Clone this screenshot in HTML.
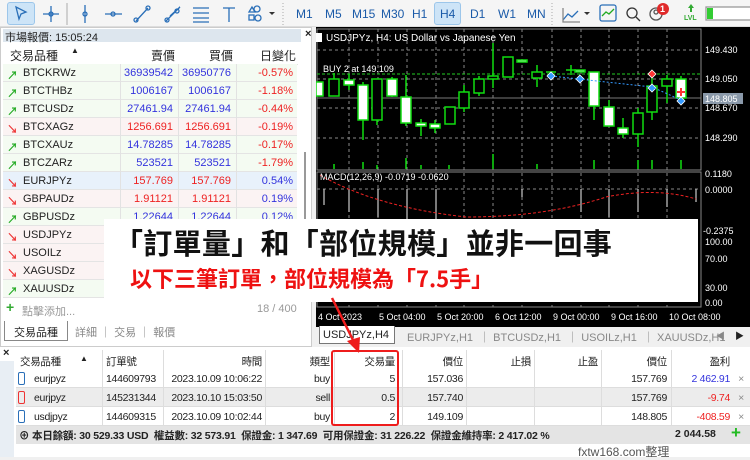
<!DOCTYPE html>
<html><head><meta charset="utf-8"><style>
*{margin:0;padding:0;box-sizing:border-box}
body{width:750px;height:457px;overflow:hidden;background:#f0f0f0;font-family:"Liberation Sans","Noto Sans CJK TC",sans-serif;font-size:11px;color:#222;position:relative}
.a{position:absolute}
.tb{left:0;top:0;width:750px;height:27px;background:#f5f5f5;border-bottom:1px solid #ddd}
.tf{font-size:12px;color:#1a5aa8;top:7px}
.lp{left:0;top:27px;width:312px;height:320px;background:#fff;border:1px solid #ccc}
.row{position:absolute;left:3px;width:294px;height:18px;background:#f4fbf2;border-bottom:1px solid #e4e4e4;font-size:11px}
.row span{position:absolute;top:3px}
.c1{left:20px;color:#222}.c2{right:124px;text-align:right}.c3{right:66px}.c4{right:4px}
.bl{color:#3333dd}.rd{color:#ee2222}
.vl{position:absolute;top:0;height:18px;width:1px;background:#e2e2e2}
.tbl{left:0;top:347px;width:750px;height:110px;background:#fff}
.tr{position:absolute;left:16px;width:734px;height:19px;border-bottom:1px solid #ddd;font-size:10.5px;letter-spacing:-0.3px}
.tr span{position:absolute;top:4px}
</style></head><body>
<div class="a tb">
 <div class="a" style="left:7px;top:2px;width:28px;height:23px;background:#cde4f7;border:1px solid #9cc6ea;border-radius:3px"></div>
 <svg class="a" style="left:0;top:0" width="290" height="27" fill="none" stroke="#2a6fb8" stroke-width="1.3">
  <path d="M16 7l3 12 2-5 5-2z"/>
  <path d="M51 6v16M43 14h16"/><circle cx="51" cy="14" r="2"/>
  <line x1="67" y1="3" x2="67" y2="25" stroke="#bbb"/>
  <path d="M85 5v18"/><circle cx="85" cy="14" r="2"/>
  <path d="M105 14h17"/><circle cx="113" cy="14" r="2"/>
  <path d="M136 21l12-13"/><circle cx="136" cy="20" r="2"/><circle cx="148" cy="8" r="2"/>
  <path d="M166 21l14-14M170 16l10-9"/><circle cx="167" cy="20" r="2"/><circle cx="177" cy="11" r="2"/>
  <path d="M193 8h16M193 13h16M193 18h16M193 22h16"/>
  <path d="M223 8h12M229 8v14"/>
  <circle cx="257" cy="9" r="3"/><path d="M249 12l3-5 3 5z"/><rect x="249" y="15" width="5" height="5"/><circle cx="258" cy="18" r="3"/>
  <path d="M269 12l3 3 3-3z" fill="#333" stroke="none"/>
  <line x1="283" y1="3" x2="283" y2="25" stroke="#bbb" stroke-dasharray="1 2"/>
 </svg>
 <span class="a tf" style="left:296px">M1</span><span class="a tf" style="left:325px">M5</span><span class="a tf" style="left:352px">M15</span><span class="a tf" style="left:381px">M30</span><span class="a tf" style="left:412px">H1</span>
 <div class="a" style="left:434px;top:2px;width:27px;height:23px;background:#cde4f7;border:1px solid #9cc6ea;border-radius:3px"></div>
 <span class="a tf" style="left:440px">H4</span><span class="a tf" style="left:470px">D1</span><span class="a tf" style="left:498px">W1</span><span class="a tf" style="left:527px">MN</span>
 <svg class="a" style="left:550px;top:0" width="200" height="27" fill="none" stroke="#2a6fb8" stroke-width="1.3">
  <line x1="2" y1="3" x2="2" y2="25" stroke="#bbb" stroke-dasharray="1 2"/>
  <path d="M13 20l5-6 4 3 6-6" /><path d="M13 8v14h17" stroke="#888"/>
  <path d="M34 12l3 3 3-3z" fill="#333" stroke="none"/>
  <rect x="50" y="5" width="16" height="16" rx="2"/><path d="M52 16l4-4 3 2 5-5" stroke="#2a2"/>
  <circle cx="82" cy="13" r="5" stroke="#333"/><path d="M86 17l4 4" stroke="#333"/>
  <circle cx="106" cy="14" r="6" stroke="#555"/><circle cx="106" cy="12" r="2" stroke="#555"/>
  <circle cx="113" cy="9" r="6" fill="#e02a2a" stroke="none"/>
  <path d="M141 4l-3 4h2v4h2v-4h2z" fill="#3a3" stroke="none"/>
  <rect x="156" y="7" width="48" height="13" stroke="#999" fill="#fff"/><rect x="157" y="8" width="6" height="11" fill="#3c3" stroke="none"/>
 </svg>
 <span class="a" style="left:660px;top:4px;color:#fff;font-size:9px;font-weight:bold">1</span>
 <span class="a" style="left:684px;top:15px;color:#3a3;font-size:7px;font-weight:bold">LVL</span>
</div>

<div class="a lp">
 <div class="a" style="left:2px;top:1px;width:298px;height:13px;background:#dde6ee"></div>
 <span class="a" style="left:4px;top:1px;font-size:11px">市場報價: 15:05:24</span>
 <span class="a" style="left:304px;top:0;font-size:11px;font-weight:bold">×</span>
 <div class="a" style="left:3px;top:16px;width:294px;height:21px;background:#fff;border-bottom:1px solid #e2e2e2"></div>
 <span class="a" style="left:9px;top:19px;font-size:12px">交易品種</span><span class="a" style="left:70px;top:18px;font-size:8px">▲</span>
 <span class="a" style="left:150px;top:19px;font-size:12px">賣價</span><span class="a" style="left:208px;top:19px;font-size:12px">買價</span><span class="a" style="left:259px;top:19px;font-size:12px">日變化</span>
 <div class="a" style="left:303px;top:124px;width:2px;height:150px;background:#999"></div>
</div>
<div id="rows"></div>
<div class="a" style="left:3px;top:298px;width:300px;height:20px;background:#fff"></div>
<span class="a" style="left:6px;top:299px;color:#3a3;font-size:14px;font-weight:bold">+</span>
<span class="a" style="left:22px;top:303px;color:#999">點擊添加...</span><span class="a" style="left:257px;top:303px;color:#999">18 / 400</span>
<div class="a" style="left:4px;top:321px;width:64px;height:20px;background:#fff;border:1px solid #888;border-top:none"></div>
<span class="a" style="left:14px;top:324px">交易品種</span><span class="a" style="left:75px;top:324px;color:#888">詳細 ｜ 交易 ｜ 報價</span>

<svg class="a" style="left:316px;top:27px" width="434" height="300">
 <rect width="434" height="300" fill="#000"/>
 <rect x="1" y="2" width="384" height="141" fill="none" stroke="#888"/>
 <rect x="1" y="145" width="384" height="135" fill="none" stroke="#888"/>
 <g stroke="#888" stroke-dasharray="3 3">
  <line x1="1" y1="23" x2="385" y2="23"/><line x1="1" y1="52" x2="385" y2="52"/><line x1="1" y1="81" x2="385" y2="81"/><line x1="1" y1="111" x2="385" y2="111"/>
  <line x1="1" y1="162" x2="385" y2="162"/>
  <line x1="33" y1="2" x2="33" y2="280"/><line x1="62" y1="2" x2="62" y2="280"/><line x1="91" y1="2" x2="91" y2="280"/><line x1="120" y1="2" x2="120" y2="280"/><line x1="148" y1="2" x2="148" y2="280"/><line x1="177" y1="2" x2="177" y2="280"/><line x1="206" y1="2" x2="206" y2="280"/><line x1="236" y1="2" x2="236" y2="280"/><line x1="265" y1="2" x2="265" y2="280"/><line x1="293" y1="2" x2="293" y2="280"/><line x1="322" y1="2" x2="322" y2="280"/><line x1="351" y1="2" x2="351" y2="280"/>
 </g>
 <line x1="1" y1="47" x2="385" y2="47" stroke="#2c2" stroke-dasharray="3 2"/>
 <line x1="1" y1="71" x2="385" y2="71" stroke="#777"/>
 <g stroke="#1d1" stroke-width="1.5">
  <line x1="18" y1="46" x2="18" y2="69"/><line x1="33" y1="47" x2="33" y2="63"/><line x1="47" y1="55" x2="47" y2="113"/><line x1="61" y1="52" x2="61" y2="98"/><line x1="76" y1="50" x2="76" y2="70"/><line x1="90" y1="48" x2="90" y2="99"/><line x1="105" y1="92" x2="105" y2="109"/><line x1="119" y1="93" x2="119" y2="106"/><line x1="148" y1="58" x2="148" y2="85"/><line x1="163" y1="49" x2="163" y2="69"/><line x1="177" y1="16" x2="177" y2="61"/><line x1="221" y1="38" x2="221" y2="60"/><line x1="278" y1="45" x2="278" y2="93"/><line x1="293" y1="73" x2="293" y2="99"/><line x1="307" y1="91" x2="307" y2="111"/><line x1="322" y1="81" x2="322" y2="120"/><line x1="336" y1="48" x2="336" y2="93"/><line x1="351" y1="48" x2="351" y2="76"/><line x1="365" y1="49" x2="365" y2="73"/>
 </g>
 <g stroke="#1d1" stroke-width="1.5">
  <rect x="0" y="55" width="7" height="14" fill="#fff"/>
  <rect x="13" y="52" width="10" height="17" fill="#000"/>
  <rect x="28" y="53" width="10" height="5" fill="#fff"/>
  <rect x="42" y="58" width="10" height="35" fill="#fff"/>
  <rect x="56" y="52" width="10" height="41" fill="#000"/>
  <rect x="71" y="52" width="10" height="17" fill="#fff"/>
  <rect x="85" y="70" width="10" height="26" fill="#fff"/>
  <rect x="100" y="96" width="10" height="3" fill="#fff"/>
  <rect x="114" y="97" width="10" height="4" fill="#fff"/>
  <rect x="129" y="80" width="10" height="17" fill="#000"/>
  <rect x="143" y="65" width="10" height="16" fill="#000"/>
  <rect x="158" y="52" width="10" height="14" fill="#000"/>
  <rect x="172" y="49" width="10" height="3" fill="#000"/>
  <rect x="187" y="30" width="10" height="20" fill="#000"/>
  <rect x="201" y="33" width="10" height="2" fill="#fff"/>
  <rect x="216" y="45" width="10" height="6" fill="#000"/>
  <path d="M230 45h10M250 43h10M255 38v10"/>
  <rect x="259" y="43" width="10" height="2" fill="#fff"/>
  <rect x="273" y="45" width="10" height="34" fill="#fff"/>
  <rect x="288" y="80" width="10" height="19" fill="#fff"/>
  <rect x="302" y="101" width="10" height="6" fill="#fff"/>
  <rect x="317" y="86" width="10" height="21" fill="#000"/>
  <rect x="331" y="59" width="10" height="26" fill="#000"/>
  <rect x="346" y="52" width="10" height="7" fill="#000"/>
  <rect x="360" y="52" width="10" height="19" fill="#fff"/>
 </g>
 <g fill="#39f" stroke="#fff" stroke-width="0.8">
  <path d="M235 45l4 4-4 4-4-4z"/><path d="M264 48l4 4-4 4-4-4z"/><path d="M336 57l4 4-4 4-4-4z"/><path d="M365 70l4 4-4 4-4-4z"/>
 </g>
 <path d="M336 43l4 4-4 4-4-4z" fill="#f33" stroke="#fff" stroke-width=".8"/>
 <path d="M365 61v8M361 65h8" stroke="#f33" stroke-width="2"/>
 <path d="M235 49 L336 60 L365 73" stroke="#39f" stroke-dasharray="2 2" fill="none"/>
 <g stroke="#1d1" stroke-width="1.5">
  <line x1="18" y1="137" x2="18" y2="142"/><line x1="47" y1="135" x2="47" y2="142"/><line x1="61" y1="138" x2="61" y2="142"/><line x1="90" y1="131" x2="90" y2="142"/><line x1="105" y1="138" x2="105" y2="142"/><line x1="133" y1="138" x2="133" y2="142"/><line x1="177" y1="127" x2="177" y2="142"/><line x1="221" y1="137" x2="221" y2="142"/><line x1="278" y1="133" x2="278" y2="142"/><line x1="322" y1="133" x2="322" y2="142"/><line x1="336" y1="133" x2="336" y2="142"/><line x1="365" y1="133" x2="365" y2="142"/>
 </g>
 <g stroke="#bbb" stroke-width="1.3">
  <line x1="8" y1="162" x2="8" y2="178"/><line x1="33" y1="162" x2="33" y2="185"/><line x1="62" y1="162" x2="62" y2="190"/><line x1="91" y1="162" x2="91" y2="195"/><line x1="120" y1="162" x2="120" y2="196"/><line x1="206" y1="162" x2="206" y2="170"/><line x1="265" y1="162" x2="265" y2="185"/><line x1="293" y1="162" x2="293" y2="190"/><line x1="322" y1="162" x2="322" y2="185"/><line x1="351" y1="162" x2="351" y2="180"/><line x1="380" y1="162" x2="380" y2="175"/>
 </g>
 <path d="M4 148 Q60 180 150 190 Q230 190 290 170 Q340 160 380 172" stroke="#e22" stroke-dasharray="3 2" fill="none"/>
 <text x="10" y="14" fill="#fff" font-size="10" font-family="Liberation Sans">USDJPYz, H4:  US Dollar vs Japanese Yen</text>
 <rect x="-2" y="6" width="8" height="9" fill="#fff"/>
 <text x="7" y="45" fill="#fff" font-size="9" font-family="Liberation Sans">BUY 2 at 149.109</text>
 <text x="4" y="153" fill="#fff" font-size="9" font-family="Liberation Sans">MACD(12,26,9) -0.0719 -0.0620</text>
 <g fill="#fff" font-size="9" font-family="Liberation Sans">
  <text x="389" y="26">149.430</text><text x="389" y="55">149.050</text><text x="389" y="84">148.670</text><text x="389" y="114">148.290</text>
  <text x="389" y="150">0.1180</text><text x="389" y="166">0.0000</text><text x="387" y="207">-0.2375</text><text x="389" y="218">100.00</text><text x="389" y="235">70.00</text><text x="389" y="264">30.00</text><text x="389" y="279">0.00</text>
  <text x="2" y="293">4 Oct 2023</text><text x="63" y="293">5 Oct 04:00</text><text x="121" y="293">5 Oct 20:00</text><text x="179" y="293">6 Oct 12:00</text><text x="237" y="293">9 Oct 00:00</text><text x="295" y="293">9 Oct 16:00</text><text x="353" y="293">10 Oct 08:00</text>
 </g>
 <rect x="387" y="66" width="40" height="11" fill="#8a99aa"/>
 <text x="389" y="75" fill="#fff" font-size="9" font-family="Liberation Sans">148.805</text>
</svg>
<div class="a" style="left:316px;top:327px;width:434px;height:17px;background:#f0f0f0"></div>
<div class="a" style="left:319px;top:326px;width:76px;height:18px;background:#fff;border:1px solid #777;border-top:none"></div>
<div class="a" style="left:323px;top:329px;font-size:11px;word-spacing:0">USDJPYz,H4</div>
<div class="a" style="left:407px;top:329px;font-size:11px;color:#888">EURJPYz,H1 &nbsp;｜ BTCUSDz,H1 &nbsp;｜ USOILz,H1 &nbsp;｜ XAUUSDz,H1</div>
<span class="a" style="left:716px;top:329px;font-size:9px;color:#888">◀</span><span class="a" style="left:735px;top:329px;font-size:9px">▶</span>

<div class="a tbl">
 <span class="a" style="left:3px;top:0;font-size:11px;font-weight:bold">×</span>
 <div class="a" style="left:0;top:14px;width:14px;height:96px;background:#e8eef4"></div>
</div>
<div id="tb"></div>
<div class="a" style="left:16px;top:426px;width:734px;height:18px;background:#e4e4e4"></div>
<span class="a" style="left:19px;top:428px;font-size:10.5px;letter-spacing:-0.2px;font-weight:bold">⊕ 本日餘額: 30 529.33 USD &nbsp;權益數: 32 573.91 &nbsp;保證金: 1 347.69 &nbsp;可用保證金: 31 226.22 &nbsp;保證金維持率: 2 417.02 %</span>
<span class="a" style="left:675px;top:428px;font-size:10.5px;font-weight:bold">2 044.58</span>
<span class="a" style="left:731px;top:423px;color:#2b2;font-size:17px;font-weight:bold">+</span>
<span class="a" style="left:578px;top:443px;font-size:12px;color:#555">fxtw168.com整理</span>
<div class="a" style="left:331px;top:350px;width:68px;height:76px;border:2px solid #ee1c1c;border-radius:3px"></div>

<div class="a" style="left:104px;top:219px;width:594px;height:83px;background:#fff"></div>
<div class="a" style="left:114px;top:221px;font-size:29px;font-weight:bold;color:#111;letter-spacing:0.3px;font-family:'Noto Sans CJK TC','Liberation Sans',sans-serif;white-space:nowrap">「訂單量」和「部位規模」並非一回事</div>
<div class="a" style="left:130px;top:262px;font-size:22px;font-weight:bold;color:#ee1111;font-family:'Noto Sans CJK TC','Liberation Sans',sans-serif;white-space:nowrap">以下三筆訂單，部位規模為「7.5手」</div>
<svg class="a" style="left:320px;top:295px" width="50" height="62"><path d="M12 3L34 47" stroke="#ee1c1c" stroke-width="2.5"/><path d="M27 46l12 12 1-16z" fill="#ee1c1c"/></svg>

<script>
var R=[["BTCKRWz","36939542","36950776","-0.57%",1,1],["BTCTHBz","1006167","1006167","-1.18%",1,1],["BTCUSDz","27461.94","27461.94","-0.44%",1,1],["BTCXAGz","1256.691","1256.691","-0.19%",0,0],["BTCXAUz","14.78285","14.78285","-0.17%",1,1],["BTCZARz","523521","523521","-1.79%",1,1],["EURJPYz","157.769","157.769","0.54%",0,0],["GBPAUDz","1.91121","1.91121","0.19%",0,0],["GBPUSDz","1.22644","1.22644","0.12%",1,1],["USDJPYz","","","",0,0],["USOILz","","","",0,0],["XAGUSDz","","","",0,0],["XAUUSDz","","","",1,1]];
var h="";R.forEach(function(r,k){var y=64+18*k;var bg=k==6?"#e8f1fb":(r[4]?"#f4fbf2":"#fbf3f3");
h+='<div class="row" style="top:'+y+'px;background:'+bg+'"><span style="left:4px;color:'+(r[4]?'#2a2':'#e33')+';font-weight:bold">'+(r[4]?'↗':'↘')+'</span><span class="c1">'+r[0]+'</span><span class="c2 '+(r[5]?'bl':'rd')+'">'+r[1]+'</span><span class="c3 '+(r[5]?'bl':'rd')+'">'+r[2]+'</span><span class="c4 '+(r[3][0]=='-'?'rd':'bl')+'">'+r[3]+'</span><i class="vl" style="left:117px"></i><i class="vl" style="left:175px"></i><i class="vl" style="left:233px"></i></div>';});
document.getElementById("rows").innerHTML=h;
var T=[["交易品種","訂單號","時間","類型","交易量","價位","止損","止盈","價位","盈利","",""],["eurjpyz","144609793","2023.10.09 10:06:22","buy","5","157.036","","","157.769","2 462.91","#33d","#2a6fb8"],["eurjpyz","145231344","2023.10.10 15:03:50","sell","0.5","157.740","","","157.769","-9.74","#e22","#e33"],["usdjpyz","144609315","2023.10.09 10:02:44","buy","2","149.109","","","148.805","-408.59","#e22","#2a6fb8"]];
var rt=[0,0,262,330,395,463,531,598,667,730];var s="";
T.forEach(function(r,i){var y=350+19*i;var bg=i==2?"#ececec":"#fff";
s+='<div class="tr" style="top:'+y+'px;background:'+bg+(i==0?';height:21px':'')+'">';
if(i>0)s+='<i style="position:absolute;left:2px;top:3px;width:7px;height:13px;border:1.5px solid '+r[11]+';border-radius:2px"></i>';
s+='<span style="left:'+(i==0?4:18)+'px">'+r[0]+'</span>'+(i==0?'<span style="left:64px;font-size:8px">▲</span>':'')+'<span style="left:90px">'+r[1]+'</span>';
for(var c=2;c<10;c++)s+='<span style="right:'+(750-rt[c])+'px'+(c==9&&i>0?';color:'+r[10]:'')+'">'+r[c]+'</span>';
[102,163,265,334,402,466,534,601,671].forEach(function(x){s+='<i style="position:absolute;left:'+(x-16)+'px;top:0;width:1px;height:100%;background:#ddd"></i>'});
if(i>0)s+='<span style="right:6px;color:#888">×</span>';
s+='</div>';});
document.getElementById("tb").innerHTML=s;
</script>
</body></html>
